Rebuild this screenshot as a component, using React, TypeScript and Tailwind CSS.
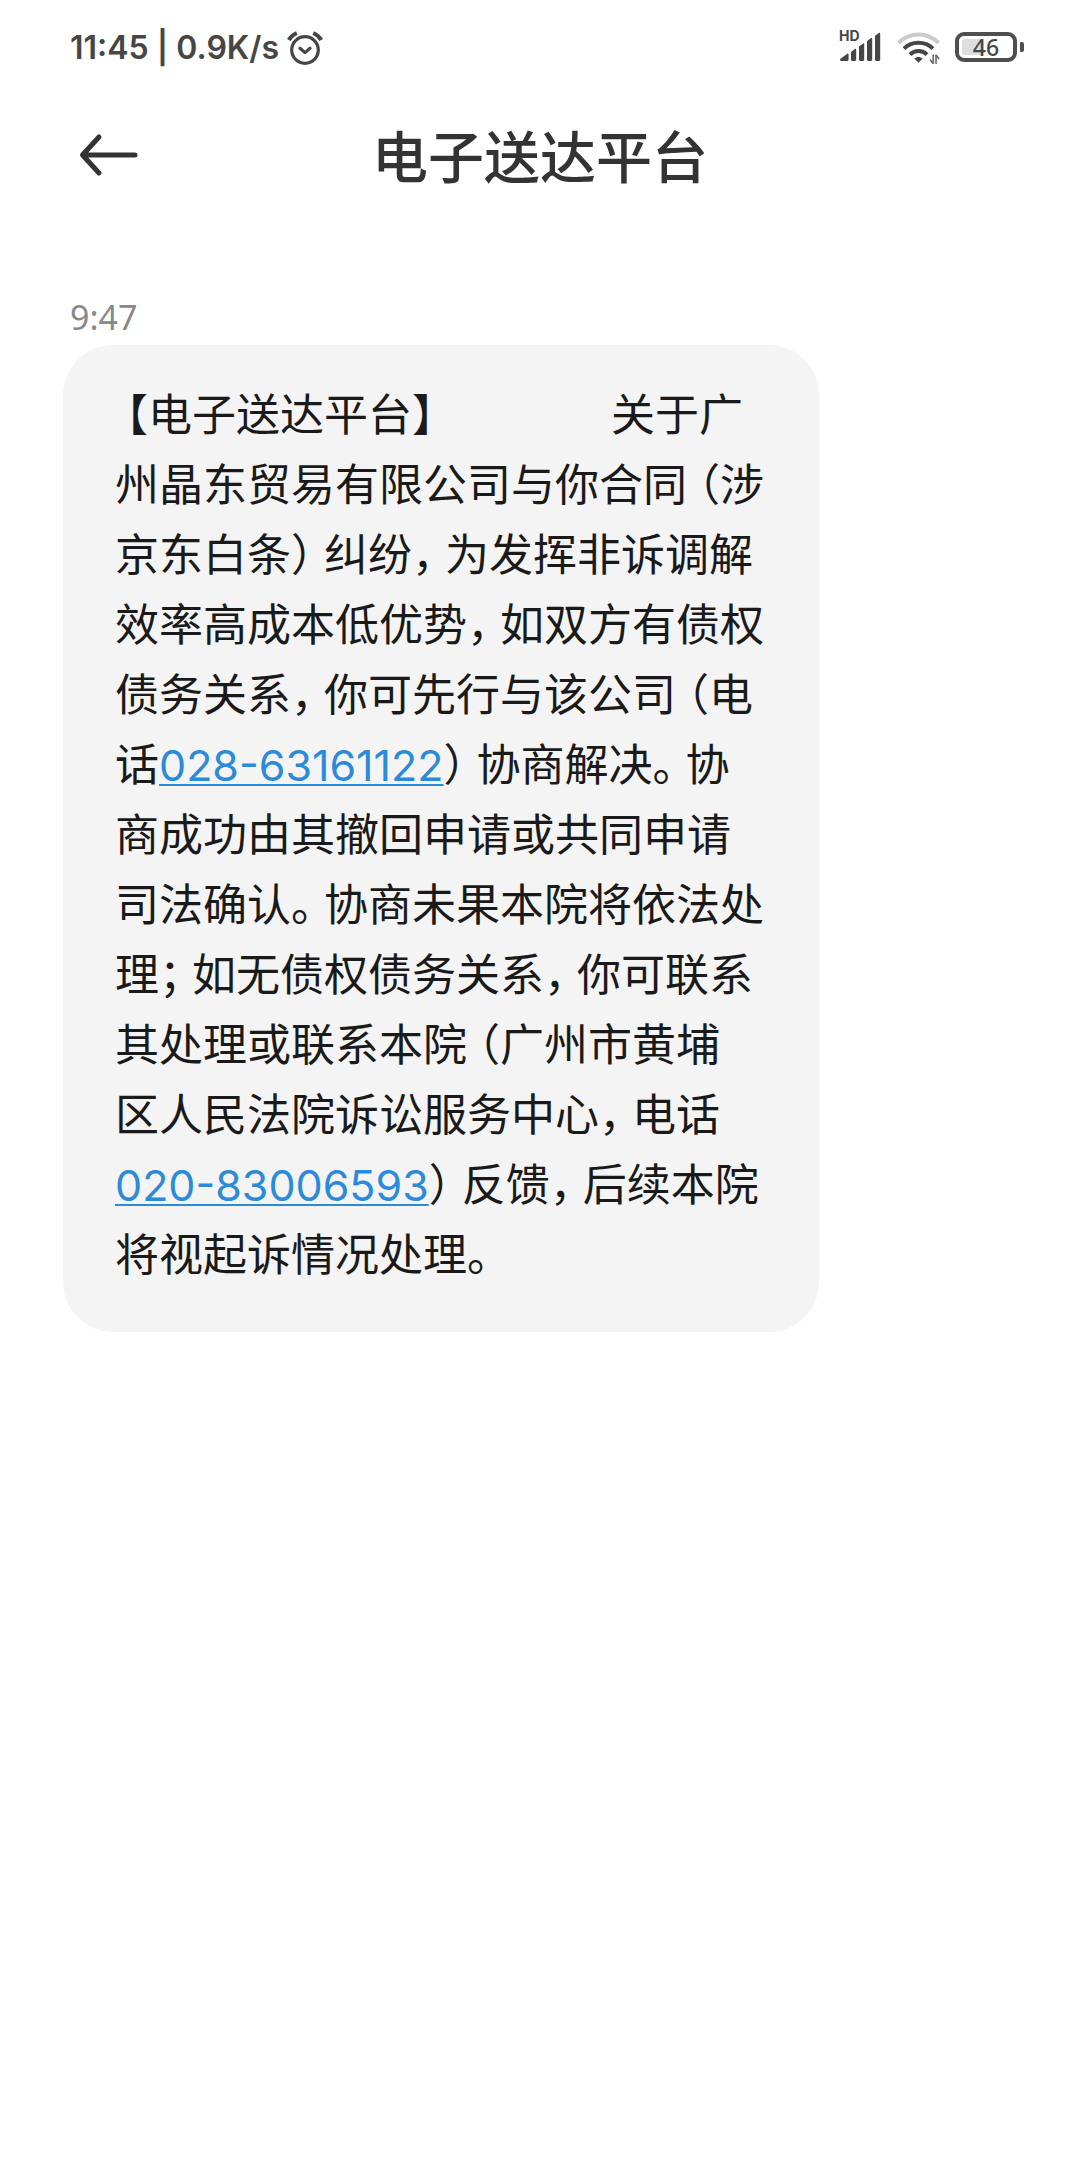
const SENDER = "电子送达平台";

const MESSAGE = [
  "【电子送达平台】 关于广",
  "州晶东贸易有限公司与你合同（涉",
  "京东白条）纠纷，为发挥非诉调解",
  "效率高成本低优势，如双方有债权",
  "债务关系，你可先行与该公司（电",
  "话028-63161122）协商解决。协",
  "商成功由其撤回申请或共同申请",
  "司法确认。协商未果本院将依法处",
  "理；如无债权债务关系，你可联系",
  "其处理或联系本院（广州市黄埔",
  "区人民法院诉讼服务中心，电话",
  "020-83006593）反馈，后续本院",
  "将视起诉情况处理。",
];

function AlarmIcon() {
  return (
    <svg width="36" height="36" viewBox="0 0 36 36" fill="none" stroke="currentColor" strokeWidth="3.2" strokeLinecap="round" strokeLinejoin="round">
      <circle cx="18" cy="20" r="13.3" />
      <path d="M13 18.200l5 4.400 5-4.400" />
      <path d="M1.800 10C3.600 6.800 6.200 4.500 9.800 3" strokeWidth="4" strokeLinecap="butt" />
      <path d="M34.200 10C32.400 6.800 29.800 4.500 26.200 3" strokeWidth="4" strokeLinecap="butt" />
    </svg>
  );
}

function SignalIcon() {
  return (
    <div className="relative h-9 w-[44px]">
      <span className="absolute left-0 top-0 text-[14px] font-bold leading-[14px]">HD</span>
      <svg className="block" width="44" height="36" viewBox="0 0 44 36" fill="currentColor">
        <path d="M1.800 29.600L8 25c1-.7 1.600-.4 1.600.6v5c0 .9-.5 1.400-1.300 1.400H2.400c-1.500 0-1.900-1.400-.6-2.400z" />
        <path d="M12 23l3.800-2.900c.8-.5 1.400-.3 1.400.6v9.900c0 .9-.5 1.400-1.300 1.400h-2.600c-.9 0-1.300-.5-1.300-1.400z" />
        <path d="M20 17.600l3.800-2.900c.8-.5 1.400-.3 1.400.6v15.300c0 .9-.5 1.400-1.300 1.400h-2.600c-.9 0-1.300-.5-1.300-1.400z" />
        <path d="M28 12.200l3.800-2.900c.8-.5 1.400-.3 1.400.6v20.700c0 .9-.5 1.400-1.300 1.400h-2.600c-.9 0-1.300-.5-1.300-1.400z" />
        <path d="M36 6.800l3.800-2.900c.8-.5 1.400-.3 1.400.6v26.100c0 .9-.5 1.400-1.300 1.400h-2.600c-.9 0-1.300-.5-1.300-1.400z" />
      </svg>
    </div>
  );
}

function WifiIcon() {
  return (
    <svg width="44" height="38" viewBox="0 0 44 38" fill="none" stroke="currentColor" strokeWidth="4">
      <path d="M1.500 15C7.200 9.400 13.900 6.600 21.500 6.600S35.800 9.400 41.500 15" stroke="#cbcbcb" />
      <path d="M7 20.600c4-3.900 8.900-5.800 14.500-5.800s10.500 1.900 14.500 5.800" />
      <path d="M13 26.600c2.400-2.300 5.200-3.500 8.500-3.500s6.100 1.200 8.500 3.500" />
      <path d="M21.500 34.700l-4.200-4.200c2.500-2.100 5.900-2.100 8.400 0z" fill="currentColor" stroke="none" />
      <path d="M36.200 26.500v9.500M36.200 35.500l-3.200-4M39 36v-9.500M39 27l3.200 4" strokeWidth="1.600" stroke="#6b6b6b" />
    </svg>
  );
}

function Battery({ level }: { level: number }) {
  return (
    <div className="flex items-center gap-[3px]">
      <div className="relative flex h-[30px] w-[62px] items-center justify-center rounded-[9px] border-4 border-[#4f4f4f]">
        <div className="absolute inset-[3px]">
          <div className="h-full rounded-[3px] bg-[#dedede]" style={{ width: `${level}%` }} />
        </div>
        <span className="relative font-['Noto_Sans'] text-[23px] font-medium leading-none">{level}</span>
      </div>
      <div className="h-[10px] w-1 rounded-r-[2px] rounded-l-[1px] bg-[#4f4f4f]" />
    </div>
  );
}

// full-width punctuation takes three quarters of an em, phone numbers become links
function MessageLine({ text }: { text: string }) {
  const parts = text.split(/(\d{3}-\d{8}|[【（】），。；]| )/).filter(Boolean);
  return (
    <span className="block">
      {parts.map((part, i) => {
        if (part === " ") return <span key={i} className="inline-block w-[166px]" />;
        if (/^\d/.test(part)) {
          return (
            <a key={i} href={`tel:${part}`} className="whitespace-nowrap text-[43px] text-[#2b8bd8] underline decoration-2 underline-offset-[3px]">
              {part}
            </a>
          );
        }
        if (/^[【（]$/.test(part)) return <span key={i} className="pl-[11px] [font-feature-settings:'halt']">{part}</span>;
        if (/^[】），。；]$/.test(part)) return <span key={i} className="pr-[11px] [font-feature-settings:'halt']">{part}</span>;
        return part;
      })}
    </span>
  );
}

function StatusBar() {
  return (
    <div className="flex h-24 items-center justify-between pl-[70px] pr-14 text-[#464646]">
      <div className="flex items-center gap-2">
        <span className="text-[32px] font-semibold leading-10">11:45 | 0.9K/s</span>
        <AlarmIcon />
      </div>
      <div className="flex items-center gap-[14px] pb-[2px]">
        <SignalIcon />
        <WifiIcon />
        <Battery level={46} />
      </div>
    </div>
  );
}

function Header() {
  return (
    <header className="grid h-[118px] grid-cols-[1fr_auto_1fr] items-center px-[78px] text-[#333333]">
      <button type="button" aria-label="返回" className="w-fit">
        <svg width="62" height="44" viewBox="0 0 62 44" fill="none" stroke="currentColor" strokeWidth="5" strokeLinecap="round" strokeLinejoin="round">
          <path d="M5 22h52M21 4L4.500 22 21 40" />
        </svg>
      </button>
      <h1 className="pt-[6px] text-[56px] font-medium leading-[70px]">{SENDER}</h1>
    </header>
  );
}

export default function App() {
  return (
    <div lang="zh-CN" className="min-h-screen bg-white font-['Inter','Noto_Sans_CJK_SC',sans-serif]">
      <StatusBar />
      <Header />
      <main className="px-[63px] pt-[83px]">
        <time className="block pl-[7px] font-['Noto_Sans'] text-[34px] leading-10 text-[#888888]">9:47</time>
        <div className="mt-2 w-fit rounded-[50px] bg-[#f4f4f4] pb-[42px] pl-[52px] pr-[55px] pt-[35px]">
          <p className="text-[44px] leading-[70px] text-[#1a1a1a]">
            {MESSAGE.map((line) => (
              <MessageLine key={line} text={line} />
            ))}
          </p>
        </div>
      </main>
    </div>
  );
}
